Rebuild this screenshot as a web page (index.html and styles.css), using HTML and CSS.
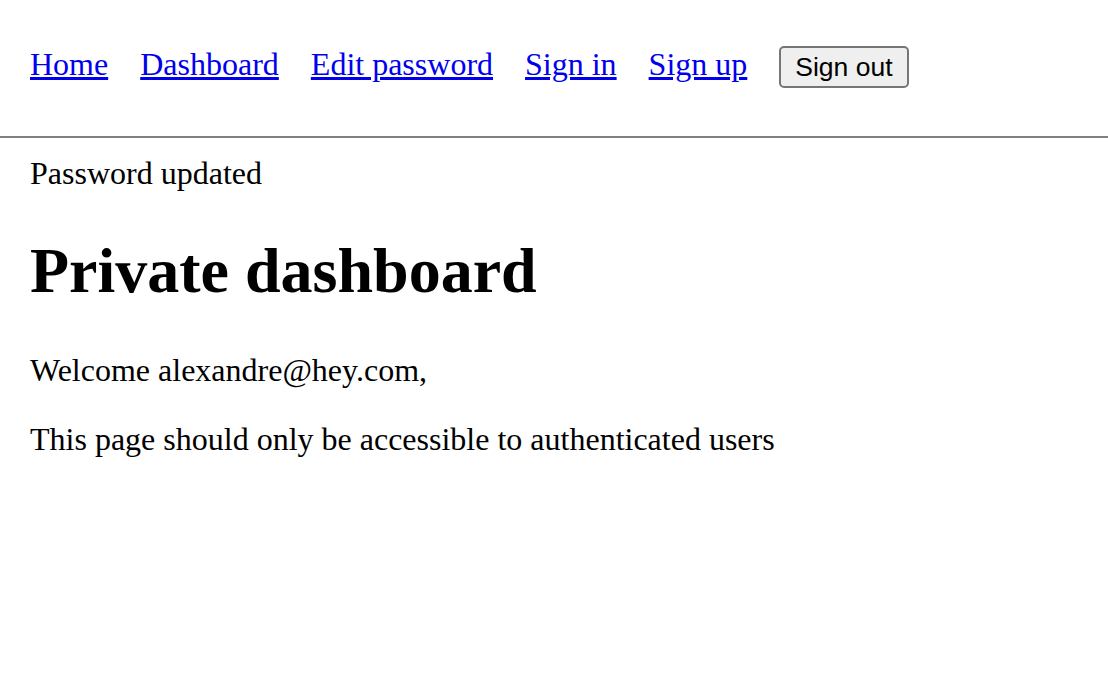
FILE: index.html
```html
<!DOCTYPE html>
<html>
<head>
    <title>Private dashboard</title>
    <link rel="stylesheet" href="styles.css">
</head>
<body>
    <nav class="navbar">
        <a href="#">Home</a>
        <a href="#">Dashboard</a>
        <a href="#">Edit password</a>
        <a href="#">Sign in</a>
        <a href="#">Sign up</a>
        <button type="button" class="sign-out">Sign out</button>
    </nav>

    <main class="content">
        <p class="flash">Password updated</p>

        <h1>Private dashboard</h1>

        <p>Welcome alexandre@hey.com,</p>

        <p>This page should only be accessible to authenticated users</p>
    </main>
</body>
</html>
```

FILE: styles.css
```css
body {
    font-family: "Liberation Serif", "Times New Roman", serif;
    font-size: 32px;
    color: #000;
    background-color: #fff;
    margin: 0;
    padding: 0;
}

.navbar {
    display: flex;
    align-items: flex-start;
    gap: 32px;
    height: 90px;
    padding: 46px 30px 0;
    border-bottom: 2px solid #808080;
}

.navbar a {
    color: #0000ee;
    text-decoration: underline;
}

.sign-out {
    font-family: "Liberation Sans", Arial, sans-serif;
    font-size: 26.5px;
    color: #000;
    background-color: #efefef;
    border: 2px solid #767676;
    border-radius: 5px;
    padding: 2px 14px;
    height: 42px;
}

.content {
    padding: 0 30px;
}

.content p {
    margin: 32px 0;
}

.content .flash {
    margin-top: 17px;
}

h1 {
    font-size: 64px;
    margin: 42px 0 44px;
}
```
